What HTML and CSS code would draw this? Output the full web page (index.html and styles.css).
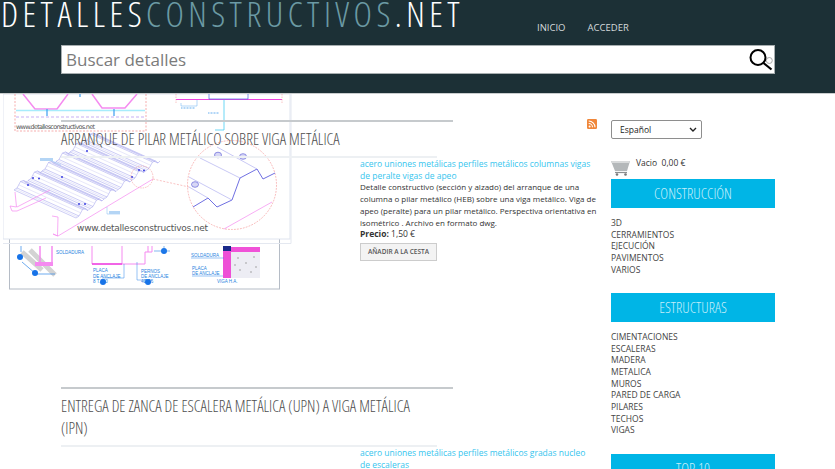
FILE: index.html
```html
<!DOCTYPE html>
<html lang="es">
<head>
<meta charset="utf-8">
<title>Detalles Constructivos</title>
<link rel="stylesheet" href="styles.css">
</head>
<body>
<header class="site-header">
  <div class="top-row">
    <a class="logo">DETALLES<span class="logo-accent">CONSTRUCTIVOS</span>.NET</a>
    <nav class="nav"><a>INICIO</a><a>ACCEDER</a></nav>
  </div>
  <form class="search">
    <span class="search-text">Buscar detalles</span>
    <svg class="search-icon" viewBox="0 0 26 26" width="26" height="26">
      <circle cx="22.3" cy="13.5" r="3" fill="#fff" stroke="#aaa" stroke-width="1"/>
      <circle cx="11" cy="10.500" r="7.500" fill="none" stroke="#000" stroke-width="2"/>
      <path d="M16.500 16L24.500 22.500" stroke="#000" stroke-width="2.200"/>
    </svg>
  </form>
</header>

<div class="page">
  <svg class="zoom-preview" viewBox="3 94 289 151" width="289" height="151">
    <defs>
      <g id="wave" fill="none" stroke="#9a9aea" stroke-width=".5">
        <path d="M0 0L3-2 6.500-8.500 9.500-9.500 12-7.500 14-9.500"/>
        <path d="M62 28L65 26 68.500 19.500 71.500 18.500 74 20.500 76 18.500"/>
        <path d="M0 0L62 28M3-2L65 26M6.500-8.500L68.500 19.500M9.500-9.500L71.500 18.500M12-7.500L74 20.500"/>
        <path d="M1.500-1L63.500 27M4.700-5.200L66.700 22.800M8-9L70 19M10.800-8.500L72.800 19.500" stroke="#c3c3f2" stroke-width=".4"/>
      </g>
    </defs>
    <rect x="3" y="94" width="287" height="145" fill="#fff" stroke="#dfe4ef"/>
    <path d="M3 243.500H291V94" fill="none" stroke="#e4e8f0"/>
    <path d="M15 94V131H146V94" fill="none" stroke="#f28a8a" stroke-width=".7" stroke-dasharray="2 1.500"/>
    <path d="M23 94L35 109H57L68 94M92 94L102 108H125L137 94" fill="none" stroke="#f58af0" stroke-width="1.500"/>
    <path d="M16 110.500H145" stroke="#a8ecfb" stroke-width="1.500"/>
    <path d="M16 117H146" stroke="#b08cf0" stroke-width=".7" stroke-dasharray="3 2"/>
    <path d="M47 109V116M114 109V116M80 94V97" stroke="#3d9df0" stroke-width="1.200"/>
    <text x="16" y="128.500" class="mini-mark" textLength="79">www.detallesconstructivos.net</text>
    <path d="M176 99.500H282" stroke="#ee44e0" stroke-width="1"/>
    <path d="M209 94V99H248V94" fill="none" stroke="#4466dd" stroke-width=".7"/>
    <path d="M224 100V130H215" fill="none" stroke="#48cdf2" stroke-width=".8"/>
    <path d="M176 94V103M282 94V103" stroke="#f28a8a" stroke-width=".5" stroke-dasharray="1.500 1"/>
    <path d="M181 103V106H197V100" fill="none" stroke="#66aef0" stroke-width=".5"/>
    <path d="M208 113H219" stroke="#66aef0" stroke-width="1" stroke-dasharray="1 .5"/>
    <path d="M181 108H195" stroke="#66aef0" stroke-width="1.200" stroke-dasharray="1 .5"/>

    <use href="#wave" x="14" y="190"/>
    <use href="#wave" x="28" y="180.500"/>
    <use href="#wave" x="42" y="171"/>
    <use href="#wave" x="56" y="161.500"/>
    <use href="#wave" x="70" y="152"/>
    <use href="#wave" x="84" y="142.500"/>
    <path d="M15 192L16.500 207 10 206 12 211H17L46 198M17 207L50 190" fill="none" stroke="#f58af0" stroke-width=".7"/>
    <path d="M58 217L57.500 236 53 234 58 236 153 179M58 217L52 216" fill="none" stroke="#f58af0" stroke-width=".7"/>
    <path d="M40 160H50L61 165" fill="none" stroke="#5fa8ee" stroke-width=".4"/>
    <rect x="40" y="158" width="13" height="3" fill="#b4d5f5"/>
    <path d="M107 207V214H120" fill="none" stroke="#5fa8ee" stroke-width=".4"/>
    <rect x="109" y="211" width="11" height="3" fill="#b4d5f5"/>
    <g fill="#3b3fe0">
      <circle cx="87" cy="151" r="1"/><circle cx="62" cy="177" r="1"/><circle cx="33" cy="178" r="1"/>
      <circle cx="39" cy="178.500" r="1"/><circle cx="28" cy="185" r="1"/><circle cx="79" cy="204" r="1"/>
      <circle cx="85" cy="204" r="1"/><circle cx="132" cy="177" r="1"/><circle cx="139" cy="170" r="1"/>
      <circle cx="144" cy="170.500" r="1"/>
    </g>
    <circle cx="142" cy="177" r="11" fill="none" stroke="#f59a9a" stroke-width=".6" stroke-dasharray="1.500 1"/>
    <path d="M153 179L189 187" stroke="#f59a9a" stroke-width=".6" stroke-dasharray="2 1.500"/>
    <circle cx="232" cy="185" r="44.500" fill="none" stroke="#f59a9a" stroke-width=".7" stroke-dasharray="1.800 1.200"/>
    <path d="M193 207L208 198 217 207 232 200 240 178 257 169 263 179 275 173" fill="none" stroke="#7070e2" stroke-width="1"/>
    <path d="M189 177L232 200M200 158L240 178M217 147L257 169M208 198L189 187" fill="none" stroke="#a5a5ee" stroke-width=".6"/>
    <g fill="#d8d8f5" stroke="#6666d8" stroke-width=".7">
      <ellipse cx="218" cy="155" rx="3.500" ry="2.800"/><ellipse cx="243" cy="156.500" rx="3.500" ry="2.800"/><ellipse cx="195" cy="184.500" rx="3.500" ry="2.800"/>
    </g>
    <path d="M224 229L272 202" stroke="#f58af0" stroke-width=".7"/>
    <text x="77" y="231" class="big-mark" textLength="131">www.detallesconstructivos.net</text>
  </svg>

  <main class="content">
    <a class="rss" aria-label="RSS">
      <svg viewBox="0 0 10 10" width="10" height="10">
        <rect width="10" height="10" rx="1.200" fill="#f0873a"/>
        <circle cx="2.600" cy="7.400" r="1" fill="#fff"/>
        <path d="M1.700 4.500A3.800 3.800 0 0 1 5.500 8.300M1.700 2A6.300 6.300 0 0 1 8 8.300" fill="none" stroke="#fff" stroke-width="1.100"/>
      </svg>
    </a>

    <article class="product">
      <h2 class="product-title">ARRANQUE DE PILAR METÁLICO SOBRE VIGA METÁLICA</h2>
      <div class="product-body">
        <svg class="thumb" viewBox="9 158 272 132" width="272" height="132">
          <rect x="9.500" y="158" width="270" height="131" fill="#fff" stroke="#b5bcc6"/>
          <path d="M22 252L42 270M30 250L55 275" stroke="#d3d3d3" stroke-width="5"/>
          <path d="M40 246V264H52V246" fill="none" stroke="#f58af0" stroke-width="1.500"/>
          <path d="M35 262H53V266H35Z" fill="#f58af0"/>
          <path d="M21 246V252M22 262L36 274H55" fill="none" stroke="#2f86e8" stroke-width=".7"/>
          <circle cx="20" cy="257" r="3" fill="#1773e8"/><circle cx="35" cy="273" r="3" fill="#1773e8"/>
          <text class="blue-note" x="56" y="254">SOLDADURA</text>
          <path d="M92 246V264H122V246M122 264H145V252H148V246M152 246V252H148" fill="none" stroke="#f58af0" stroke-width="1"/>
          <path d="M92 264H122" stroke="#ee44e0" stroke-width="1.500"/>
          <path d="M124 264V278H102M137 262V280H152" fill="none" stroke="#2f86e8" stroke-width=".5"/>
          <text class="blue-note" x="93" y="272">PLACA</text>
          <text class="blue-note" x="93" y="278">DE ANCLAJE</text>
          <text class="blue-note" x="93" y="283">8 T.300</text>
          <text class="blue-note" x="141" y="273">PERNOS</text>
          <text class="blue-note" x="141" y="278">DE ANCLAJE</text>
          <text class="blue-note" x="141" y="283">4Ø 16</text>
          <circle cx="103" cy="282" r="3" fill="#1773e8"/><circle cx="148" cy="282" r="3" fill="#1773e8"/><circle cx="164" cy="251" r="3" fill="#1773e8"/>
          <path d="M154 251H170M164 246V250" stroke="#2f86e8" stroke-width=".6"/>
          <rect x="223" y="247" width="37" height="31" fill="#ededf4"/>
          <path d="M223 247H260V252H223Z" fill="#f052d8"/>
          <rect x="223" y="252" width="8" height="26" fill="#ee4fd6"/>
          <rect x="223" y="246" width="8" height="5" fill="#1a2a8a"/>
          <g fill="#999"><circle cx="238" cy="258" r=".8"/><circle cx="246" cy="263" r=".8"/><circle cx="254" cy="257" r=".8"/><circle cx="240" cy="270" r=".8"/><circle cx="251" cy="272" r=".8"/><circle cx="235" cy="265" r=".8"/><circle cx="256" cy="267" r=".8"/></g>
          <text class="blue-note" x="191" y="257">SOLDADURA</text>
          <text class="blue-note" x="192" y="270">PLACA</text>
          <text class="blue-note" x="192" y="275">DE ANCLAJE</text>
          <text class="blue-note" x="217" y="283">VIGA H.A.</text>
          <path d="M191 258H224M192 276H223" stroke="#2f86e8" stroke-width=".5"/>
        </svg>
        <div class="product-info">
          <a class="tags">acero uniones metálicas perfiles metálicos columnas vigas de peralte vigas de apeo</a>
          <p class="desc">Detalle constructivo (sección y alzado) del arranque de una columna o pilar metálico (HEB) sobre una viga metálico. Viga de apeo (peralte) para un pilar metálico. Perspectiva orientativa en isométrico . Archivo en formato dwg.</p>
          <p class="price"><strong>Precio:</strong> 1,50 €</p>
          <button class="add-btn" type="button">AÑADIR A LA CESTA</button>
        </div>
      </div>
    </article>

    <article class="product">
      <h2 class="product-title">ENTREGA DE ZANCA DE ESCALERA METÁLICA (UPN) A VIGA METÁLICA (IPN)</h2>
      <div class="product-body">
        <div class="thumb-empty"></div>
        <div class="product-info">
          <a class="tags">acero uniones metálicas perfiles metálicos gradas nucleo de escaleras</a>
        </div>
      </div>
    </article>
  </main>

  <aside class="sidebar">
    <div class="lang"><span>Español</span>
      <svg viewBox="0 0 8 5" width="8" height="5"><path d="M1 1L4 4 7 1" fill="none" stroke="#222" stroke-width="1.400"/></svg>
    </div>
    <div class="cart">
      <svg viewBox="0 0 20 17" width="20" height="17">
        <path d="M0 2H19L16 12H4Z" fill="#b4b8ba"/>
        <path d="M0 2H19L18 4H1Z" fill="#d8dadb"/>
        <path d="M4 13.500H16" stroke="#8c8f91" stroke-width="1.200"/>
        <circle cx="6" cy="15.500" r="1.300" fill="#777"/><circle cx="14.500" cy="15.500" r="1.300" fill="#777"/>
      </svg>
      <span class="cart-text">Vacio&nbsp; 0,00 €</span>
    </div>
    <h3 class="cat-title">CONSTRUCCIÓN</h3>
    <ul class="cat-list">
      <li>3D</li><li>CERRAMIENTOS</li><li>EJECUCIÓN</li><li>PAVIMENTOS</li><li>VARIOS</li>
    </ul>
    <h3 class="cat-title">ESTRUCTURAS</h3>
    <ul class="cat-list">
      <li>CIMENTACIONES</li><li>ESCALERAS</li><li>MADERA</li><li>METALICA</li><li>MUROS</li><li>PARED DE CARGA</li><li>PILARES</li><li>TECHOS</li><li>VIGAS</li>
    </ul>
    <h3 class="cat-title">TOP 10</h3>
  </aside>
</div>
</body>
</html>
```

FILE: styles.css
```css
* { box-sizing: border-box; }
html, body { margin: 0; height: 469px; overflow: hidden; background: #fff; }
body { font-family: "Open Sans", sans-serif; color: #333; font-size: 8.500px; }

.site-header {
  position: relative;
  z-index: 5;
  height: 94px;
  background: #1c3036;
  border-bottom: 1px solid #c9cdce;
}
.top-row { display: flex; align-items: flex-start; height: 45px; }
.logo {
  width: 537px;
  padding-left: 1px;
  font-family: "Open Sans", sans-serif;
  font-weight: 350;
  font-stretch: 75%;
  font-size: 35px;
  line-height: 27px;
  letter-spacing: 4.450px;
  color: #fff;
  white-space: nowrap;
}
.logo-accent { color: #6b9aa4; }
.nav { display: flex; gap: 22px; padding-top: 21px; font-size: 9.500px; line-height: 13px; color: #d5dadb; }
.search {
  display: flex;
  align-items: center;
  justify-content: space-between;
  margin-left: 61px;
  width: 714px;
  height: 29px;
  background: #fff;
  border: 1px solid #a7aeb0;
  padding: 0 1px 0 4px;
}
.search-text { font-size: 17px; color: #7b7b7b; }
.search-icon { display: block; }

.page {
  position: relative;
  display: flex;
  padding-left: 61px;
}
.zoom-preview { position: absolute; left: 3px; top: 0; z-index: 1; }
.mini-mark { font: 6.500px "DejaVu Sans", sans-serif; fill: #555; }
.big-mark { font: 9px "DejaVu Sans", sans-serif; fill: #555; }
.blue-note { font: 4.500px "Liberation Sans", sans-serif; fill: #1f7fe0; }

.content { position: relative; width: 536px; padding-top: 26px; }
.rss { position: absolute; right: 0; top: 25px; display: block; height: 10px; }
.rss svg { display: block; }
.product { height: 267px; }
.product-title {
  position: relative;
  z-index: 2;
  width: 392px;
  margin: 0;
  padding: 6px 38px 0 0;
  border-top: 2px solid #c6cacd;
  font-weight: 300;
  font-stretch: 75%;
  font-size: 15.800px;
  line-height: 22px;
  color: #4e4e4e;
}
.product-title::after {
  content: "";
  display: block;
  width: 376px;
  height: 2px;
  margin-top: 6px;
  background: #edf0f3;
}
.product-body { display: flex; gap: 79px; }
.thumb { display: block; margin-left: -52px; flex: none; }
.thumb-empty { width: 272px; margin-left: -52px; flex: none; }
.product-info { width: 237px; padding-top: 0; line-height: 11.700px; font-size: 8px; }
.tags { display: block; color: #36c5ee; font-size: 8.500px; }
.desc { margin: 0; }
.price { margin: 0; font-size: 8.500px; }
.price strong { font-weight: 700; }
.add-btn {
  display: block;
  margin-top: 3px;
  width: 77px;
  height: 18px;
  padding: 0;
  border: 1px solid #ccc;
  background: #f3f3f3;
  color: #555;
  font: 600 6.500px "Open Sans", sans-serif;
}

.sidebar { width: 164px; margin-left: 14px; padding-top: 26px; }
.lang {
  display: flex;
  align-items: center;
  justify-content: space-between;
  width: 91px;
  height: 19px;
  padding: 0 4px 0 8px;
  border: 1px solid #8e8e8e;
  border-radius: 2px;
  font-size: 8.500px;
  color: #222;
}
.cart { display: flex; align-items: flex-start; gap: 5px; height: 40px; padding-top: 19px; }
.cart svg { display: block; margin-top: 1px; }
.cart-text { font-size: 8.500px; line-height: 9px; }
.cat-title {
  height: 29px;
  margin: 0;
  background: #00b5e6;
  color: #c5eefa;
  text-align: center;
  font-weight: 300;
  font-stretch: 75%;
  font-size: 14.800px;
  line-height: 29px;
}
.cat-list {
  list-style: none;
  margin: 0;
  padding: 9px 0 18px;
  font-size: 8.500px;
  line-height: 11.620px;
  color: #444;
}
```
